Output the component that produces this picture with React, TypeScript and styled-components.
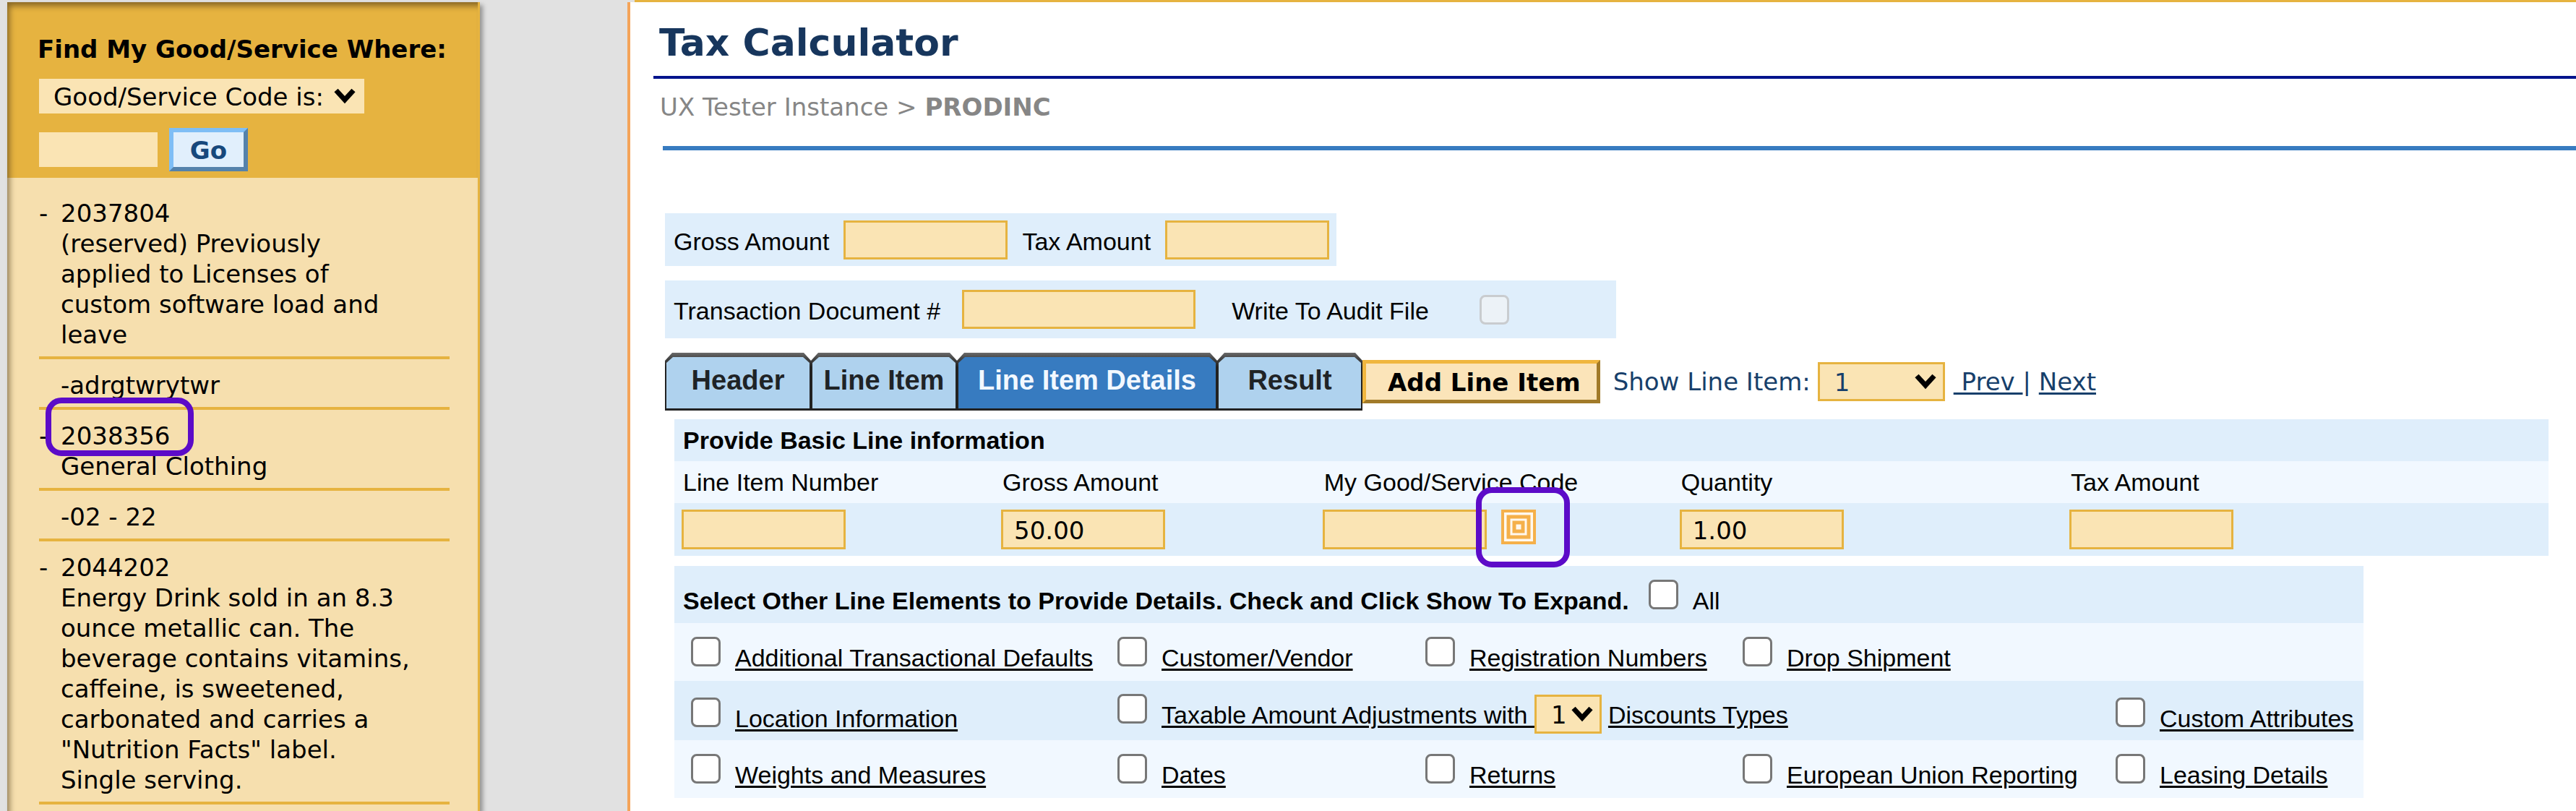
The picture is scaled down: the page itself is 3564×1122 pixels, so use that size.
import React from "react";
import styled, { createGlobalStyle, css } from "styled-components";

const verdana = `"DejaVu Sans", Verdana, sans-serif`;
const arial = `"Liberation Sans", Arial, sans-serif`;

const colors = {
  gold: "#e6b340",
  goldFill: "#fae4b4",
  goldPale: "#f6dfae",
  navy: "#17365d",
  blue: "#377bc0",
  rowDark: "#dfeefb",
  rowLight: "#f1f8ff",
  marker: "#5c0bc8",
};

const GlobalStyle = createGlobalStyle`
  *, *::before, *::after { box-sizing: border-box; }
  body {
    margin: 0;
    background: #e1e1e1;
    color: #000;
    font: 34px/42px ${arial};
  }
  input, select, button { margin: 0; font: inherit; color: inherit; }
`;

const Page = styled.div`
  display: flex;
  min-height: 100vh;
`;

const Sidebar = styled.aside`
  position: relative;
  flex: none;
  width: 654px;
  margin: 3px 204px 0 10px;
  border-right: 3px solid ${colors.gold};
  background: ${colors.goldPale};
  box-shadow: 4px 4px 6px rgba(0, 0, 0, 0.35);
  font-family: ${verdana};

  &::after {
    content: "";
    position: absolute;
    inset: 0;
    box-shadow: inset 5px 7px 8px -2px rgba(70, 50, 20, 0.6);
    pointer-events: none;
  }
`;

const SearchForm = styled.form`
  display: flex;
  flex-direction: column;
  align-items: flex-start;
  padding: 44px 0 9px 44px;
  background: ${colors.gold};
`;

const SearchTitle = styled.label`
  margin: 0 0 20px -2px;
  font-weight: bold;
  white-space: nowrap;
`;

const SearchRow = styled.div`
  display: flex;
  align-items: center;
  gap: 16px;
  margin-top: 20px;
`;

const fieldBox = css`
  background: ${colors.goldFill};
  border: 3px solid ${colors.gold};
  border-radius: 0;
  font-family: ${verdana};
  outline: none;
`;

const TextInput = styled.input<{ $width: number; $height?: number; $plain?: boolean }>`
  ${fieldBox}
  display: block;
  width: ${(p) => p.$width}px;
  height: ${(p) => p.$height ?? 54}px;
  padding: 4px 15px 2px;
  ${(p) => p.$plain && "border: 0;"}
`;

const SelectBox = styled.span`
  position: relative;
  display: inline-flex;
  align-items: center;
`;

const SelectInput = styled.select<{ $width: number; $height?: number; $plain?: boolean }>`
  ${fieldBox}
  appearance: none;
  width: ${(p) => p.$width}px;
  height: ${(p) => p.$height ?? 54}px;
  padding: 2px 20px 0;
  ${(p) => p.$plain && "border: 0;"}
`;

const Chevron = styled.svg`
  position: absolute;
  right: 12px;
  width: 30px;
  height: 22px;
  pointer-events: none;
`;

const GoButton = styled.button`
  width: 109px;
  height: 60px;
  padding: 2px 0 0;
  border: 6px solid;
  border-color: #7fbef5 #5582ab #5582ab #7fbef5;
  background: #e1effc;
  color: #17487c;
  font-family: ${verdana};
  font-weight: bold;
`;

const GoodsList = styled.ul`
  list-style: none;
  margin: 0;
  padding: 13px 39px 0 44px;
`;

const GoodsItem = styled.li`
  display: grid;
  grid-template-columns: 30px minmax(0, 495px);
  padding: 15px 0 9px;
  border-bottom: 4px solid ${colors.gold};
`;

const GoodsText = styled.div`
  grid-column: 2;
`;

const Code = styled.div`
  position: relative;
  width: max-content;
`;

const Marker = styled.span<{ $top: number; $left: number; $width: number; $height: number }>`
  position: absolute;
  z-index: 2;
  top: ${(p) => p.$top}px;
  left: ${(p) => p.$left}px;
  width: ${(p) => p.$width}px;
  height: ${(p) => p.$height}px;
  border: 8px solid ${colors.marker};
  border-radius: 22px;
  pointer-events: none;
`;

const Content = styled.div`
  display: flex;
  flex: 1;
  flex-direction: column;
  min-width: 0;
`;

const TopRule = styled.div`
  height: 3px;
  margin-left: 10px;
  background: ${colors.gold};
`;

const Main = styled.main`
  flex: 1;
  border-left: 4px solid #f4a459;
  background: #fff;
`;

const Title = styled.h1`
  margin: 0 0 18px 32px;
  padding: 26px 0 16px 8px;
  border-bottom: 4px solid #00138c;
  color: ${colors.navy};
  font: bold 52px/60px ${verdana};
`;

const Breadcrumb = styled.nav`
  margin-left: 41px;
  color: #868686;
  font-family: ${verdana};
`;

const Calculator = styled.form`
  margin: 33px 0 0 45px;
  padding: 87px 0 0 3px;
  border-top: 6px solid ${colors.blue};
`;

const Bar = styled.div<{ $gap: number; $pad: string }>`
  display: flex;
  align-items: center;
  gap: ${(p) => p.$gap}px;
  width: fit-content;
  margin-bottom: 20px;
  padding: ${(p) => p.$pad};
  background: ${colors.rowDark};
`;

const Field = styled.div<{ $gap: number }>`
  display: flex;
  align-items: center;
  gap: ${(p) => p.$gap}px;

  label { padding-top: 4px; white-space: nowrap; }
`;

const Check = styled.input.attrs({ type: "checkbox" })`
  appearance: none;
  flex: none;
  width: 41px;
  height: 41px;
  border: 3px solid #777;
  border-radius: 8px;
  background: #fff;

  &:checked { background: ${colors.blue}; }
  &:disabled { border-color: #c9cccf; background: #ecf2f7; }
`;

const Toolbar = styled.div`
  display: flex;
  align-items: center;
  color: #173f6b;
  font-family: ${verdana};
  white-space: nowrap;
`;

const Tab = styled.button<{ $width: number }>`
  width: ${(p) => p.$width}px;
  height: 80px;
  padding: 6px 2px 3px;
  border: 0;
  background: linear-gradient(#6a6a6a, #444 8px, #222 20px);
  clip-path: polygon(0 11px, 10px 0, calc(100% - 10px) 0, 100% 11px, 100% 100%, 0 100%);
`;

const TabFace = styled.span<{ $active?: boolean }>`
  display: block;
  height: 71px;
  padding-top: 10px;
  background: ${(p) => (p.$active ? colors.blue : "#afd2ee")};
  clip-path: polygon(0 8px, 9px 0, calc(100% - 9px) 0, 100% 8px, 100% 100%, 0 100%);
  color: ${(p) => (p.$active ? "#f2f8ff" : "#1f2326")};
  font: bold 38px/44px ${arial};
`;

const AddButton = styled.button`
  height: 60px;
  margin-right: 18px;
  padding: 2px 22px 0 30px;
  border: 5px solid;
  border-color: #f0b63f #a17a29 #a17a29 #f0b63f;
  background: #fbe4b9;
  color: #000;
  font-family: ${verdana};
  font-weight: bold;
`;

const ShowLabel = styled.label`
  margin-right: 10px;
`;

const Pager = styled.nav`
  margin-left: 12px;
  white-space: pre;

  a {
    color: inherit;
    text-decoration-thickness: 3px;
    text-underline-offset: 3px;
  }
`;

const LineTable = styled.table`
  width: calc(100% - 51px);
  margin: 12px 0 14px 13px;
  border-collapse: collapse;
  table-layout: fixed;

  th {
    padding: 8px 12px;
    background: ${colors.rowDark};
    text-align: left;
    font-weight: bold;
  }
  th[scope="col"] {
    background: ${colors.rowLight};
    font-weight: normal;
  }
  td {
    padding: 9px 10px;
    background: ${colors.rowDark};
  }
`;

const CellFields = styled.div`
  display: flex;
  align-items: flex-start;
  gap: 20px;
`;

const LookupButton = styled.button`
  position: relative;
  width: 48px;
  height: 48px;
  padding: 0;
  border: 0;
  background: none;

  svg { display: block; }
`;

const Elements = styled.fieldset`
  width: fit-content;
  margin: 0 0 0 13px;
  padding: 0;
  border: 0;
`;

const ElementsHead = styled.div`
  display: flex;
  align-items: baseline;
  gap: 27px;
  padding: 19px 12px 10px;
  background: ${colors.rowDark};
`;

const ElementsRow = styled.div<{ $dark?: boolean }>`
  display: grid;
  grid-template-columns: 590px 426px 439px 516px 343px;
  align-items: end;
  padding: ${(p) => (p.$dark ? "18px 0 9px 23px" : "19px 0 11px 23px")};
  background: ${(p) => (p.$dark ? colors.rowDark : colors.rowLight)};
`;

const Choice = styled.div<{ $span?: number; $start?: number }>`
  display: flex;
  align-items: baseline;
  grid-column: ${(p) => p.$start ?? "auto"} / span ${(p) => p.$span ?? 1};
  white-space: pre;

  ${Check} { margin-right: 20px; }
  ${SelectBox} { margin-right: 9px; }

  a {
    color: #000;
    text-decoration-thickness: 3px;
    text-underline-offset: 3px;
  }
`;

const Arrow = () => (
  <Chevron viewBox="0 0 30 22" aria-hidden="true">
    <path d="M3 3 15 16 27 3" fill="none" stroke="#000" strokeWidth="7" />
  </Chevron>
);

const TargetIcon = () => (
  <svg width="48" height="48" viewBox="0 0 48 48" fill="#fff8ee" stroke="#f5b04a" strokeWidth="4" aria-hidden="true">
    <rect x="2" y="2" width="44" height="44" />
    <rect x="10" y="10" width="28" height="28" strokeWidth="5" />
    <rect x="18" y="18" width="12" height="12" strokeWidth="5" />
  </svg>
);

const goods = [
  { code: "2037804", text: "(reserved) Previously applied to Licenses of custom software load and leave" },
  { text: "-adrgtwrytwr" },
  { code: "2038356", text: "General Clothing", marked: true },
  { text: "-02 - 22" },
  {
    code: "2044202",
    text: 'Energy Drink sold in an 8.3 ounce metallic can. The beverage contains vitamins, caffeine, is sweetened, carbonated and carries a "Nutrition Facts" label. Single serving.',
  },
];

const tabs = [
  { name: "Header", width: 202 },
  { name: "Line Item", width: 202 },
  { name: "Line Item Details", width: 360, active: true },
  { name: "Result", width: 201 },
];

const ElementChoice = ({ id, name, start }: { id: string; name: string; start?: number }) => (
  <Choice $start={start}>
    <Check id={id} />
    <label htmlFor={id}><a href="#details">{name}</a></label>
  </Choice>
);

export default function App() {
  return (
    <>
      <GlobalStyle />
      <Page>
        <Sidebar>
          <SearchForm onSubmit={(e) => e.preventDefault()}>
            <SearchTitle htmlFor="search-by">Find My Good/Service Where:</SearchTitle>
            <SelectBox>
              <SelectInput id="search-by" $width={450} $height={48} $plain>
                <option>Good/Service Code is:</option>
              </SelectInput>
              <Arrow />
            </SelectBox>
            <SearchRow>
              <TextInput $width={164} $height={48} $plain aria-label="Search value" />
              <GoButton type="submit">Go</GoButton>
            </SearchRow>
          </SearchForm>
          <GoodsList>
            {goods.map((g) => (
              <GoodsItem key={g.text}>
                {g.code && <span>-</span>}
                <GoodsText>
                  {g.code && (
                    <Code>
                      {g.code}
                      {g.marked && <Marker $top={-32} $left={-21} $width={205} $height={81} />}
                    </Code>
                  )}
                  {g.text}
                </GoodsText>
              </GoodsItem>
            ))}
          </GoodsList>
        </Sidebar>
        <Content>
          <TopRule />
          <Main>
            <Title>Tax Calculator</Title>
            <Breadcrumb>UX Tester Instance &gt; <b>PRODINC</b></Breadcrumb>
            <Calculator onSubmit={(e) => e.preventDefault()}>
              <Bar $gap={20} $pad="10px 10px 9px 12px">
                <Field $gap={20}>
                  <label htmlFor="gross">Gross Amount</label>
                  <TextInput id="gross" $width={227} />
                </Field>
                <Field $gap={20}>
                  <label htmlFor="tax">Tax Amount</label>
                  <TextInput id="tax" $width={227} />
                </Field>
              </Bar>
              <Bar $gap={50} $pad="13px 148px 13px 12px">
                <Field $gap={30}>
                  <label htmlFor="doc">Transaction Document #</label>
                  <TextInput id="doc" $width={323} />
                </Field>
                <Field $gap={70}>
                  <label htmlFor="audit">Write To Audit File</label>
                  <Check id="audit" disabled />
                </Field>
              </Bar>
              <Toolbar>
                {tabs.map((t) => (
                  <Tab key={t.name} type="button" $width={t.width}>
                    <TabFace $active={t.active}>{t.name}</TabFace>
                  </Tab>
                ))}
                <AddButton type="button">Add Line Item</AddButton>
                <ShowLabel htmlFor="line">Show Line Item:</ShowLabel>
                <SelectBox>
                  <SelectInput id="line" $width={176}>
                    <option>1</option>
                  </SelectInput>
                  <Arrow />
                </SelectBox>
                <Pager>
                  <a href="#prev">{"\u00a0Prev\u00a0"}</a>| <a href="#next">Next</a>
                </Pager>
              </Toolbar>
              <LineTable>
                <colgroup>
                  <col style={{ width: "17.05%" }} />
                  <col style={{ width: "17.15%" }} />
                  <col style={{ width: "19.05%" }} />
                  <col style={{ width: "20.8%" }} />
                  <col />
                </colgroup>
                <thead>
                  <tr><th colSpan={5}>Provide Basic Line information</th></tr>
                  <tr>
                    <th scope="col" id="c-number">Line Item Number</th>
                    <th scope="col" id="c-gross">Gross Amount</th>
                    <th scope="col" id="c-code">My Good/Service Code</th>
                    <th scope="col" id="c-quantity">Quantity</th>
                    <th scope="col" id="c-tax">Tax Amount</th>
                  </tr>
                </thead>
                <tbody>
                  <tr>
                    <td><TextInput $width={227} $height={55} aria-labelledby="c-number" /></td>
                    <td><TextInput $width={227} $height={55} aria-labelledby="c-gross" defaultValue="50.00" /></td>
                    <td>
                      <CellFields>
                        <TextInput $width={227} $height={55} aria-labelledby="c-code" />
                        <LookupButton type="button" aria-label="Look up code">
                          <TargetIcon />
                          <Marker $top={-31} $left={-35} $width={130} $height={111} />
                        </LookupButton>
                      </CellFields>
                    </td>
                    <td><TextInput $width={227} $height={55} aria-labelledby="c-quantity" defaultValue="1.00" /></td>
                    <td><TextInput $width={227} $height={55} aria-labelledby="c-tax" /></td>
                  </tr>
                </tbody>
              </LineTable>
              <Elements>
                <ElementsHead>
                  <b>Select Other Line Elements to Provide Details. Check and Click Show To Expand.</b>
                  <Choice>
                    <Check id="all" />
                    <label htmlFor="all">All</label>
                  </Choice>
                </ElementsHead>
                <ElementsRow>
                  <ElementChoice id="defaults" name="Additional Transactional Defaults" />
                  <ElementChoice id="customer" name="Customer/Vendor" />
                  <ElementChoice id="registration" name="Registration Numbers" />
                  <ElementChoice id="drop" name="Drop Shipment" />
                </ElementsRow>
                <ElementsRow $dark>
                  <ElementChoice id="location" name="Location Information" />
                  <Choice $span={3}>
                    <Check id="taxable" />
                    <label htmlFor="taxable"><a href="#details">{"Taxable Amount Adjustments with "}</a></label>
                    <SelectBox>
                      <SelectInput $width={93} aria-label="Number of discount types">
                        <option>1</option>
                      </SelectInput>
                      <Arrow />
                    </SelectBox>
                    <a href="#details">Discounts Types</a>
                  </Choice>
                  <ElementChoice id="custom" name="Custom Attributes" start={5} />
                </ElementsRow>
                <ElementsRow>
                  <ElementChoice id="weights" name="Weights and Measures" />
                  <ElementChoice id="dates" name="Dates" />
                  <ElementChoice id="returns" name="Returns" />
                  <ElementChoice id="eu" name="European Union Reporting" />
                  <ElementChoice id="leasing" name="Leasing Details" />
                </ElementsRow>
              </Elements>
            </Calculator>
          </Main>
        </Content>
      </Page>
    </>
  );
}
